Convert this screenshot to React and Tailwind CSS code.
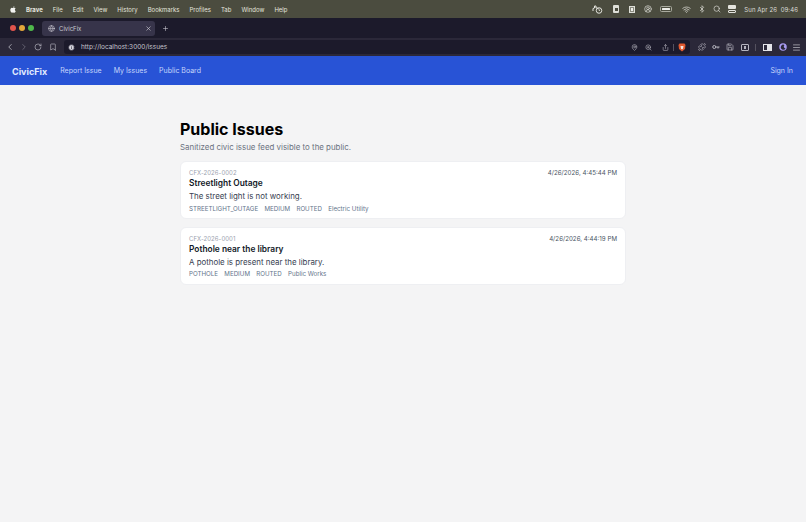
import {
  ChevronLeft,
  ChevronRight,
  RotateCw,
  Bookmark,
  MapPin,
  ZoomIn,
  Share,
  Puzzle,
  Save,
  Menu,
  Wifi,
  Bluetooth,
  Search,
  Globe,
  X,
  Plus,
  Info,
  CircleUserRound,
} from 'lucide-react';

const menuItems = ['File', 'Edit', 'View', 'History', 'Bookmarks', 'Profiles', 'Tab', 'Window', 'Help'];

const issues = [
  {
    id: 'CFX-2026-0002',
    date: '4/26/2026, 4:45:44 PM',
    title: 'Streetlight Outage',
    body: 'The street light is not working.',
    tags: ['STREETLIGHT_OUTAGE', 'MEDIUM', 'ROUTED', 'Electric Utility'],
  },
  {
    id: 'CFX-2026-0001',
    date: '4/26/2026, 4:44:19 PM',
    title: 'Pothole near the library',
    body: 'A pothole is present near the library.',
    tags: ['POTHOLE', 'MEDIUM', 'ROUTED', 'Public Works'],
  },
];

function MenuBar() {
  return (
    <div className="h-[18px] bg-[#4b4c3f] flex items-center pl-[9px] pr-[8px] text-[6px] text-[#e4e4de]">
      <svg width="8" height="9" viewBox="0 0 24 24" fill="#f2f2f0">
        <path d="M17.6 12.8c0-2.6 2.1-3.8 2.2-3.9-1.2-1.8-3.1-2-3.7-2-1.6-.2-3.1.9-3.9.9s-2-.9-3.3-.9C7.200 7 5.600 7.900 4.800 9.400c-1.800 3.100-.5 7.700 1.300 10.200.9 1.200 1.900 2.600 3.200 2.500 1.300-.1 1.800-.8 3.300-.8s2 .8 3.300.8c1.400 0 2.300-1.200 3.100-2.500 1-1.400 1.400-2.800 1.400-2.900-.1 0-2.800-1.100-2.800-4.100zM15 5.200c.7-.9 1.200-2 1-3.200-1 0-2.200.7-2.900 1.500-.6.700-1.200 1.900-1 3 1.100.1 2.200-.5 2.900-1.300z" />
      </svg>
      <span className="ml-[9px] font-bold">Brave</span>
      <div className="ml-[10px] flex gap-[10px]">
        {menuItems.map((item) => (
          <span key={item}>{item}</span>
        ))}
      </div>
      <div className="ml-auto flex items-center text-[#dcdcd6]">
        {/* status icons */}
        <svg width="11" height="9" viewBox="0 0 22 18" fill="none">
          <path d="M2 12V7l3-1V2h3v4h3l2 2" stroke="#e4e4de" strokeWidth="2" />
          <circle cx="14" cy="11" r="5.500" stroke="#e4e4de" strokeWidth="2" />
          <path d="M14 8v3h2" stroke="#e4e4de" strokeWidth="1.500" />
        </svg>
        <div className="ml-[10.5px] w-[6px] h-[8px] rounded-[1px] bg-[#dedfd8] flex items-center justify-center">
          <div className="w-[3px] h-[3px] bg-[#4b4c3f]" />
        </div>
        <div className="ml-[10px] w-[6px] h-[7px] border border-[#dedfd8] bg-[#8a8b80] flex items-center justify-center">
          <div className="w-[2px] h-[3px] bg-[#efefea]" />
        </div>
        <CircleUserRound size={8} className="ml-[9px]" />
        <div className="ml-[8px] w-[12px] h-[6px] rounded-[1.5px] border border-[#a9aa9f] p-px">
          <div className="w-[8px] h-full bg-[#eeeee9] rounded-[0.5px]" />
        </div>
        <Wifi size={9} className="ml-[9.5px]" />
        <Bluetooth size={8} className="ml-[7.5px]" />
        <Search size={8} className="ml-[7px]" />
        <div className="ml-[7px] w-[8px] h-[8px] flex flex-col gap-px">
          <div className="h-[3.500px] rounded-[1px] bg-[#e4e4de]" />
          <div className="h-[3.500px] rounded-[1px] border border-[#e4e4de]" />
        </div>
        <span className="ml-[8px] text-[6px] tracking-[0.1px]">Sun Apr 26&nbsp; 09:46</span>
      </div>
    </div>
  );
}

function TabStrip() {
  return (
    <div className="h-[20px] bg-[#1c1a2b] flex items-center pl-[10px]">
      <div className="flex gap-[3px]">
        <span className="w-[6px] h-[6px] rounded-full bg-[#e0544c]" />
        <span className="w-[6px] h-[6px] rounded-full bg-[#e3a73a]" />
        <span className="w-[6px] h-[6px] rounded-full bg-[#4fb84b]" />
      </div>
      <div className="ml-[8px] w-[113px] h-[15px] rounded-[3px] bg-[#37344a] flex items-center pl-[5.5px] pr-[3.5px] text-[6px] text-[#c9c8d0]">
        <Globe size={7} />
        <span className="ml-[4.5px]">CivicFix</span>
        <X size={7} className="ml-auto text-[#d8d7de]" />
      </div>
      <Plus size={7} className="ml-[7px] text-[#c9c8d0]" />
    </div>
  );
}

function AddressBar() {
  return (
    <div className="h-[18px] bg-[#2b2839] flex items-center pl-[5px] text-[#b5b4be]">
      <ChevronLeft size={10} />
      <ChevronRight size={10} className="ml-[4px] text-[#6c6a78]" />
      <RotateCw size={8} className="ml-[5px]" />
      <Bookmark size={8} className="ml-[7px]" />
      <div className="ml-[7px] w-[626px] h-[14px] rounded-[3px] bg-[#1c1a2b] flex items-center pl-[3.5px] pr-[4px] flex-none">
        <Info size={7} className="text-[#1c1a2b] fill-[#d8d7de]" />
        <span className="ml-[6.5px] mt-px text-[6.5px] text-[#c4c3cc]">http://localhost:3000/issues</span>
        <div className="ml-auto flex items-center">
          <MapPin size={7} />
          <ZoomIn size={7} className="ml-[7px]" />
          <Share size={7} className="ml-[10px]" />
          <div className="ml-[4px] w-px h-[7px] bg-[#55525f]" />
          <svg width="8" height="9" viewBox="0 0 16 18" className="ml-[4px]">
            <path d="M3 1h10l2 3-1 8-6 5-6-5-1-8z" fill="#e2592f" />
            <path d="M5 6h6l-1 5-2 2-2-2z" fill="#f5e6e0" />
          </svg>
        </div>
      </div>
      <div className="flex items-center">
        <Puzzle size={8} className="ml-[8px]" />
        <svg width="8" height="8" viewBox="0 0 16 16" fill="none" className="ml-[6px]" stroke="#b5b4be" strokeWidth="2">
          <circle cx="4.500" cy="8" r="3" />
          <path d="M7.500 8H15M12 8v3" />
        </svg>
        <Save size={8} className="ml-[6px]" />
        <div className="ml-[7px] w-[8px] h-[7px] border border-[#b5b4be] rounded-[1px] flex items-center justify-center">
          <div className="w-[2px] h-[3px] bg-[#b5b4be]" />
        </div>
        <div className="w-px h-[7px] bg-[#55525f] ml-[6px]" />
        <div className="ml-[7px] w-[9px] h-[7px] border border-[#e4e4e8] flex justify-end">
          <div className="w-[4px] bg-[#e4e4e8]" />
        </div>
        <svg width="8" height="8" viewBox="0 0 16 16" className="ml-[6.500px]">
          <circle cx="8" cy="8" r="7.500" fill="#a99cf2" />
          <path d="M11 4a5 5 0 1 0 2 7 4 4 0 0 1-2-7z" fill="#2b2839" />
        </svg>
        <Menu size={9} className="ml-[5.5px]" />
      </div>
    </div>
  );
}

function IssueCard({ issue }) {
  return (
    <div className="bg-white rounded-[6px] border border-[#eeeff2] pt-[7px] pb-[4.5px] px-[8px]">
      <div className="flex justify-between items-center leading-[8px]">
        <span className="text-[6px] text-[#9ca3af] tracking-[0.05px]">{issue.id}</span>
        <span className="text-[6.2px] text-[#4b5563]">{issue.date}</span>
      </div>
      <h2 className="text-[8.4px] leading-[12px] font-semibold text-[#111827]">{issue.title}</h2>
      <p className="mt-px text-[7.9px] leading-[12px] text-[#374151]">{issue.body}</p>
      <div className="mt-[1.5px] flex gap-[6.3px] text-[6.2px] leading-[10px] text-[#64748b]">
        {issue.tags.map((tag) => (
          <span key={tag}>{tag}</span>
        ))}
      </div>
    </div>
  );
}

export default function App() {
  return (
    <div className="w-[806px] h-[522px] overflow-hidden flex flex-col bg-[#f4f4f5] font-['Inter',sans-serif]">
      <MenuBar />
      <TabStrip />
      <AddressBar />

      {/* nav */}
      <nav className="h-[29px] bg-[#2853d6] flex items-center pl-[12px] pr-[13px] pt-[2px] text-[7px] text-[#c7d7fb]">
        <span className="text-[9px] font-bold text-[#e4ecff]">CivicFix</span>
        <div className="ml-[13px] flex gap-[12px]">
          <span>Report Issue</span>
          <span>My Issues</span>
          <span>Public Board</span>
        </div>
        <span className="ml-auto">Sign In</span>
      </nav>

      <main className="w-[446px] mt-[34px] ml-[180px]">
        <h1 className="text-[16px] leading-[20px] font-bold text-black">Public Issues</h1>
        <p className="mt-[2px] text-[7.9px] leading-[12px] text-[#6b7280]">Sanitized civic issue feed visible to the public.</p>
        <div className="mt-[8px] flex flex-col gap-[7.5px]">
          {issues.map((issue) => (
            <IssueCard key={issue.id} issue={issue} />
          ))}
        </div>
      </main>
    </div>
  );
}
